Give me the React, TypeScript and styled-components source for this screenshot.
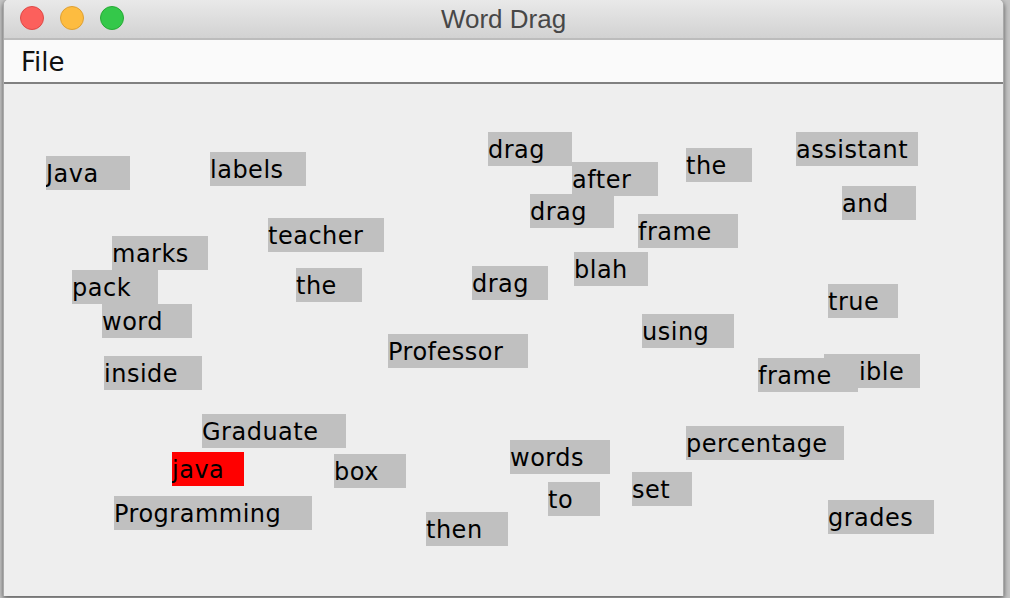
import React from "react";
import styled, { createGlobalStyle } from "styled-components";

const Global = createGlobalStyle`
  html, body {
    margin: 0;
    padding: 0;
    width: 1010px;
    height: 598px;
    overflow: hidden;
    background: #c4c4c4;
  }
  body {
    padding-left: 3px;
    box-sizing: border-box;
  }
`;

const Window = styled.div`
  width: 1001px;
  height: 596px;
  box-sizing: border-box;
  display: flex;
  flex-direction: column;
  background: #eeeeee;
  border-left: 1px solid #a9a9a9;
  border-right: 1px solid #a9a9a9;
  border-radius: 5px 5px 0 0;
  overflow: hidden;
  box-shadow: 0 2px 5px rgba(0, 0, 0, 0.55);
`;

const TitleBar = styled.div`
  position: relative;
  height: 38px;
  flex: 0 0 auto;
  background: linear-gradient(#e9e9e9, #d2d2d2);
  border-bottom: 2px solid #bcbcbc;
  display: flex;
  align-items: center;
  justify-content: center;
`;

const Lights = styled.div`
  position: absolute;
  left: 16px;
  top: 6px;
  display: flex;
  gap: 16px;
`;

const Light = styled.span<{ $fill: string; $edge: string }>`
  width: 24px;
  height: 24px;
  box-sizing: border-box;
  border-radius: 50%;
  background: ${(p) => p.$fill};
  border: 1px solid ${(p) => p.$edge};
`;

const Title = styled.div`
  font-family: "Liberation Sans", Arial, sans-serif;
  font-size: 26px;
  line-height: 36px;
  color: #474747;
`;

const MenuBar = styled.div`
  height: 42px;
  flex: 0 0 auto;
  background: #fafafa;
  border-bottom: 2px solid #808080;
  display: flex;
  align-items: flex-start;
  padding-left: 17px;
`;

const MenuItem = styled.div`
  font-family: "DejaVu Sans", sans-serif;
  font-size: 26px;
  line-height: 45px;
  color: #111111;
`;

const Canvas = styled.div`
  position: relative;
  flex: 1 1 auto;
  background: #eeeeee;
`;

const Word = styled.div.attrs<{ $x: number; $y: number; $w: number }>((p) => ({
  style: { left: p.$x, top: p.$y, width: p.$w },
}))<{ $x: number; $y: number; $w: number; $active?: boolean }>`
  position: absolute;
  height: 34px;
  box-sizing: border-box;
  padding-top: 1px;
  background: ${(p) => (p.$active ? "#ff0000" : "#c0c0c0")};
  font-family: "DejaVu Sans", sans-serif;
  font-size: 24px;
  letter-spacing: 0.5px;
  line-height: 34px;
  color: #000000;
  white-space: nowrap;
  overflow: hidden;
`;

type W = { t: string; x: number; y: number; w: number; active?: boolean };

const WORDS: W[] = [
  { t: "Java", x: 46, y: 156, w: 84 },
  { t: "labels", x: 210, y: 152, w: 96 },
  { t: "drag", x: 488, y: 132, w: 84 },
  { t: "after", x: 572, y: 162, w: 86 },
  { t: "drag", x: 530, y: 194, w: 84 },
  { t: "the", x: 686, y: 148, w: 66 },
  { t: "assistant", x: 796, y: 132, w: 122 },
  { t: "and", x: 842, y: 186, w: 74 },
  { t: "frame", x: 638, y: 214, w: 100 },
  { t: "teacher", x: 268, y: 218, w: 116 },
  { t: "marks", x: 112, y: 236, w: 96 },
  { t: "pack", x: 72, y: 270, w: 86 },
  { t: "the", x: 296, y: 268, w: 66 },
  { t: "drag", x: 472, y: 266, w: 76 },
  { t: "blah", x: 574, y: 252, w: 74 },
  { t: "true", x: 828, y: 284, w: 70 },
  { t: "word", x: 102, y: 304, w: 90 },
  { t: "using", x: 642, y: 314, w: 92 },
  { t: "Professor", x: 388, y: 334, w: 140 },
  { t: "inside", x: 104, y: 356, w: 98 },
  { t: "visible", x: 824, y: 354, w: 96 },
  { t: "frame", x: 758, y: 358, w: 100 },
  { t: "Graduate", x: 202, y: 414, w: 144 },
  { t: "java", x: 172, y: 452, w: 72, active: true },
  { t: "box", x: 334, y: 454, w: 72 },
  { t: "words", x: 510, y: 440, w: 100 },
  { t: "percentage", x: 686, y: 426, w: 158 },
  { t: "set", x: 632, y: 472, w: 60 },
  { t: "to", x: 548, y: 482, w: 52 },
  { t: "grades", x: 828, y: 500, w: 106 },
  { t: "Programming", x: 114, y: 496, w: 198 },
  { t: "then", x: 426, y: 512, w: 82 },
];

const ORIGIN_X = 4;
const ORIGIN_Y = 84;

export default function App() {
  return (
    <>
      <Global />
      <Window>
        <TitleBar>
          <Lights>
            <Light $fill="#fc605c" $edge="#de4a47" />
            <Light $fill="#fdbc40" $edge="#dea034" />
            <Light $fill="#34c84a" $edge="#27aa35" />
          </Lights>
          <Title>Word Drag</Title>
        </TitleBar>
        <MenuBar>
          <MenuItem>File</MenuItem>
        </MenuBar>
        <Canvas>
          {WORDS.map((w, i) => (
            <Word
              key={i}
              $x={w.x - ORIGIN_X}
              $y={w.y - ORIGIN_Y}
              $w={w.w}
              $active={w.active}
            >
              {w.t}
            </Word>
          ))}
        </Canvas>
      </Window>
    </>
  );
}
